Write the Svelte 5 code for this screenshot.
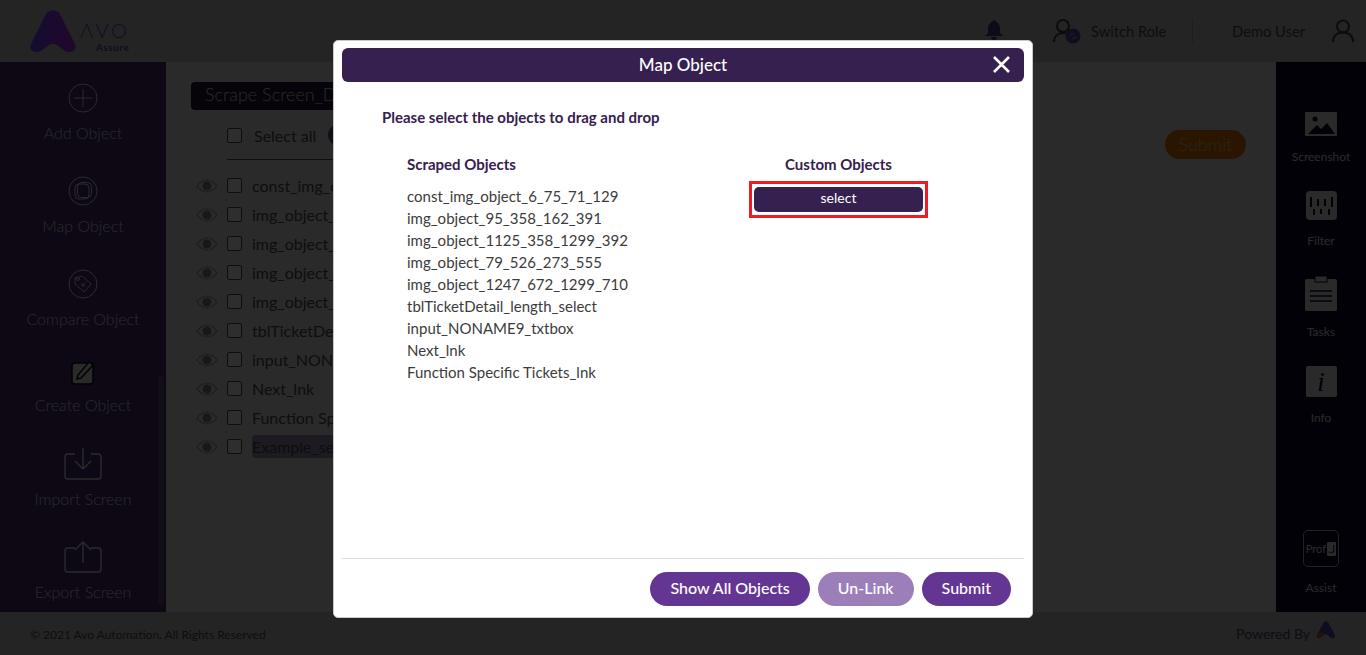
<script>
  const rows = ['const_img_object_6_75_71_129','img_object_95_358_162_391','img_object_1125_358_1299_392','img_object_79_526_273_555','img_object_1247_672_1299_710','tblTicketDetail_length_select','input_NONAME9_txtbox','Next_lnk','Function Specific Tickets_lnk'];
  const background = ['const_img_ob','img_object_','img_object_','img_object_','img_object_','tblTicketDet','input_NONA','Next_lnk','Function Spe','Example_sel'];
</script>

<div class="page">
  <header class="top">
    <div class="brand">
      <svg width="48" height="43" viewBox="0 0 48 43"><defs><linearGradient id="lg" x1="0" x2="1" y1="0" y2="0"><stop offset="0" stop-color="#6a3cff"/><stop offset="1" stop-color="#a02ccf"/></linearGradient></defs><path d="M17 4c3-5 11-5 14 0l15 30c2 5-1 8-6 8-6 0-10-8-16-8S14 42 8 42c-5 0-8-3-6-8z" fill="url(#lg)"/></svg>
      <div class="wordmark"><span class="avo">ΛVO</span><span class="assure">Assure</span></div>
    </div>
    <div class="top-right">
      <svg class="bell" width="18" height="20" viewBox="0 0 18 20"><path d="M9 0c1 0 2 1 2 2 3 1 4 4 4 7v4l3 3H0l3-3V9c0-3 1-6 4-7 0-1 1-2 2-2zM6 17h6c0 2-1 3-3 3s-3-1-3-3z" fill="#4a3478"/></svg>
      <svg class="switch" width="29" height="26" viewBox="0 0 29 26"><circle cx="10" cy="8" r="6" fill="none" stroke="#3a3a3a" stroke-width="2"/><path d="M1 24c0-6 4-9 9-9 2 0 4 .5 5 1.500" fill="none" stroke="#3a3a3a" stroke-width="2"/><circle cx="20" cy="18" r="7.500" fill="#5a3ea0"/><path d="M17 18c0-2 2-3 4-2M23 18c0 2-2 3-4 2" fill="none" stroke="#b4b4b4" stroke-width="1"/></svg>
      <span class="role">Switch Role</span>
      <span class="sep"></span>
      <span class="user">Demo User</span>
      <svg class="usericon" width="22" height="24" viewBox="0 0 22 24"><circle cx="11" cy="7.500" r="6" fill="none" stroke="#3a3a3a" stroke-width="2"/><path d="M1 23c0-6 4-9.500 10-9.500S21 17 21 23" fill="none" stroke="#3a3a3a" stroke-width="2"/></svg>
    </div>
  </header>

  <main class="main">
    <nav class="left">
      <div class="item"><span class="ic"><svg width="30" height="30" viewBox="0 0 30 30"><g fill="none" stroke="#d2d2d2" stroke-width="1"><circle cx="15" cy="15" r="14"/><path d="M15 6v18M6 15h18"/></g></svg></span><span>Add Object</span></div>
      <div class="item"><span class="ic"><svg width="30" height="30" viewBox="0 0 30 30"><g fill="none" stroke="#d2d2d2" stroke-width="1"><circle cx="15" cy="15" r="14"/><rect x="7" y="8" width="14" height="15" rx="4"/><rect x="9.500" y="6.500" width="14" height="15" rx="4"/></g></svg></span><span>Map Object</span></div>
      <div class="item"><span class="ic"><svg width="30" height="30" viewBox="0 0 30 30"><g fill="none" stroke="#d2d2d2" stroke-width="1"><circle cx="15" cy="15" r="14"/><path d="M7 9l7-2 9 8-7 8-9-8z"/><circle cx="10" cy="10" r="1.500"/><path d="M18 13l-4 4M14 14v3h3"/></g></svg></span><span>Compare Object</span></div>
      <div class="item small"><span class="ic"><svg width="24" height="24" viewBox="0 0 24 24"><rect x="1" y="2" width="21" height="21" rx="3" fill="#d2d2d2" stroke="#0a0a0a" stroke-width="1.500"/><path d="M6 18l1-4L18 1l4 3L10 17z" fill="#d2d2d2" stroke="#0a0a0a" stroke-width="1.500"/></svg></span><span>Create Object</span></div>
      <div class="item"><span class="ic"><svg width="38" height="32" viewBox="0 0 38 32"><g fill="none" stroke="#d2d2d2" stroke-width="1.400"><path d="M11 6H4C2 6 1 7 1 9v19c0 2 1 3 3 3h30c2 0 3-1 3-3V9c0-2-1-3-3-3h-7"/><path d="M19 0v21M11 13l8 8 8-8"/></g></svg></span><span>Import Screen</span></div>
      <div class="item"><span class="ic"><svg width="38" height="32" viewBox="0 0 38 32"><g fill="none" stroke="#d2d2d2" stroke-width="1.400"><path d="M11 7H4C2 7 1 8 1 10v18c0 2 1 3 3 3h30c2 0 3-1 3-3V10c0-2-1-3-3-3h-7"/><path d="M19 22V1M11 9l8-8 8 8"/></g></svg></span><span>Export Screen</span></div>
      <span class="thumb"></span>
    </nav>

    <section class="content">
      <div class="crumb">Scrape Screen_D</div>
      <div class="allrow"><span class="box"></span><span>Select all</span><span class="dot"></span></div>
      <div class="list">
        {#each background as r, i}
          <div class="lrow">
            <svg width="22" height="14" viewBox="0 0 22 14"><path d="M1 7c3-4 6-6 10-6s7 2 10 6c-3 4-6 6-10 6S4 11 1 7z" fill="none" stroke="#8c8c8c" stroke-width="1.200"/><circle cx="11" cy="7" r="4.500" fill="#787878"/></svg>
            <span class="box"></span>
            <span class:hl={i === 9} class="ltext">{r}</span>
          </div>
        {/each}
      </div>
      <button class="orange">Submit</button>
    </section>

    <aside class="right">
      <div class="tool"><svg width="32" height="24" viewBox="0 0 32 24"><rect width="32" height="24" rx="1" fill="#d2d2d2"/><circle cx="10" cy="7" r="2.500" fill="#0f0528"/><path d="M3 22l9-9 4 4 6-6 8 11z" fill="#0f0528"/></svg><span>Screenshot</span></div>
      <div class="tool t2"><svg width="31" height="29" viewBox="0 0 31 29"><rect width="31" height="29" rx="4" fill="#d2d2d2"/><g stroke="#0f0528" stroke-width="2"><path d="M5 6v10M12 8v7M19 8v7M26 6v10M8 18v6M15 18v5M23 18v6"/></g></svg><span>Filter</span></div>
      <div class="tool t3"><svg width="32" height="35" viewBox="0 0 32 35"><rect y="3" width="32" height="32" rx="2" fill="#d2d2d2"/><rect x="10" y="0" width="12" height="6" fill="#d2d2d2" stroke="#0f0528"/><g stroke="#0f0528" stroke-width="1.500"><path d="M5 15h22M5 20h22M5 25h22"/></g></svg><span>Tasks</span></div>
      <div class="tool t4"><span class="info">i</span><span>Info</span></div>
      <div class="tool assist"><span class="prof">Prof<b>.J</b></span><span>Assist</span></div>
    </aside>
  </main>

  <footer class="foot">
    <span class="copy">© 2021 Avo Automation. All Rights Reserved</span>
    <span class="powered">Powered By
      <svg width="20" height="18" viewBox="0 0 20 18"><path d="M8 1c1-1 3-1 4 0l7 13c1 3-2 4-4 3-2-1-3-4-5-4s-4 3-6 4c-2 1-4-1-3-3z" fill="#5a3ea0"/><path d="M1 14l3-3 5 1-4 4c-2 1-5 0-4-2z" fill="#b3541e"/></svg>
    </span>
  </footer>

  <div class="backdrop"></div>

  <div class="modal">
    <div class="mhead"><span>Map Object</span>
      <svg class="close" width="19" height="19" viewBox="0 0 19 19"><path d="M2 2l15 15M17 2L2 17" stroke="#fff" stroke-width="2.600" fill="none"/></svg>
    </div>
    <div class="mbody">
      <p class="lead">Please select the objects to drag and drop</p>
      <div class="cols">
        <div class="scraped">
          <h4>Scraped Objects</h4>
          <ul>{#each rows as r}<li>{r}</li>{/each}</ul>
        </div>
        <div class="custom">
          <h4>Custom Objects</h4>
          <div class="redbox"><div class="sel">select</div></div>
        </div>
      </div>
    </div>
    <div class="mfoot">
      <button class="pill">Show All Objects</button>
      <button class="pill off">Un-Link</button>
      <button class="pill">Submit</button>
    </div>
  </div>
</div>

<style>
  :global(body) { margin: 0; font-family: Lato, "Open Sans", sans-serif; }
  .page { position: relative; height: 655px; display: flex; flex-direction: column; overflow: hidden; background: #d2d2d2; color: #464646; }
  .backdrop { position: absolute; inset: 0; background: rgba(0,0,0,.8); }

  .top { height: 62px; flex: none; background: #b4b4b4; display: flex; align-items: center; font-size: 14.700px; }
  .brand { display: flex; align-items: flex-start; margin-left: 29px; width: 110px; height: 43px; }
  .wordmark { display: flex; flex-direction: column; margin-left: 3px; margin-top: 10px; color: #5a3ea0; line-height: 1; }
  .avo { font-size: 20px; line-height: 20px; letter-spacing: 2.500px; font-weight: 300; }
  .assure { font-size: 10px; line-height: 10px; align-self: flex-end; letter-spacing: .5px; font-weight: 700; margin-top: 2px; }
  .top-right { margin-left: auto; display: flex; align-items: center; }
  .bell { margin-right: 50px; margin-bottom: 2px; }
  .switch { margin-right: 9px; }
  .role { width: 101px; }
  .sep { width: 1px; height: 24px; background: #969696; margin-right: 39px; }
  .user { margin-right: 27px; }
  .usericon { margin-right: 12px; }

  .main { flex: 1; display: flex; min-height: 0; }
  .left { position: relative; width: 166px; flex: none; background: #412864; color: #d2d2d2; padding-top: 20px; box-sizing: border-box; font-size: 16px; }
  .item { display: flex; flex-direction: column; align-items: center; line-height: 20px; gap: 9px; margin-bottom: 32px; font-weight: 300; }
  .ic { height: 32px; display: flex; align-items: center; justify-content: center; }
  .item.small { gap: 10px; margin-bottom: 33px; }
  .item.small .ic { height: 24px; }
  .thumb { position: absolute; left: 158px; top: 314px; width: 6px; height: 229px; border-radius: 3px; background: #5c4778; }

  .content { position: relative; flex: 1; padding: 20px 0 0 25px; box-sizing: border-box; }
  .crumb { width: 170px; box-sizing: border-box; height: 28px; line-height: 25px; padding: 0 0 0 14px; background: #1e0f36; color: #d2d2d2; border-radius: 4px; font-size: 18px; font-weight: 300; white-space: nowrap; }
  .allrow { display: flex; align-items: center; gap: 12px; margin-left: 36px; height: 50px; border-bottom: 1px solid #464646; font-size: 16px; box-sizing: border-box; width: 130px; padding-top: 1px; white-space: nowrap; }
  .dot { width: 22px; height: 22px; border-radius: 50%; background: #5c4778; flex: none; }
  .list { margin-top: 11px; }
  .lrow { display: flex; align-items: center; height: 29px; font-size: 16px; margin-left: 5px; }
  .lrow svg { margin-right: 9px; flex: none; }
  .box { width: 13px; height: 13px; border: 1px solid #464646; border-radius: 2px; flex: none; background: #e6e6e6; box-sizing: content-box; }
  .lrow .box { margin-right: 10px; }
  .ltext { padding: 2px 0; white-space: nowrap; }
  .hl { background: #9080a8; border-radius: 3px; }
  .orange { position: absolute; right: 30px; top: 68px; width: 81px; height: 29px; border-radius: 15px; border: 0; background: #d26e00; color: #e0b080; font: 300 18px Lato, sans-serif; padding: 0 0 2px; }

  .right { width: 90px; flex: none; background: #0f0528; color: #d2d2d2; display: flex; flex-direction: column; align-items: center; font-size: 12px; padding-top: 50px; box-sizing: border-box; }
  .tool { display: flex; flex-direction: column; align-items: center; gap: 14px; line-height: 14px; }
  .t2 { margin-top: 27px; }
  .t3 { margin-top: 28px; }
  .t4 { margin-top: 27px; }
  .info { width: 31px; height: 31px; border-radius: 2px; background: #d2d2d2; color: #0f0528; font: italic 28px/31px "Liberation Serif", serif; text-align: center; }
  .assist { margin-top: auto; margin-bottom: 17px; }
  .prof { width: 36px; height: 37px; border: 1px solid #aaa; border-radius: 5px; box-sizing: border-box; display: flex; align-items: center; justify-content: center; font-size: 11px; }
  .prof b { background: #d2d2d2; color: #0f0528; font-weight: 400; padding: 0 1px; border-radius: 1px; margin-left: 1px; }

  .foot { height: 43px; flex: none; background: #b4b4b4; display: flex; align-items: center; justify-content: space-between; padding: 0 30px; box-sizing: border-box; font-size: 12px; color: #464646; }
  .copy { margin-top: 2px; }
  .powered { font-size: 14px; color: #464068; display: flex; align-items: center; gap: 6px; margin-bottom: 1px; }
  .powered svg { margin-bottom: 6px; }

  .modal { position: absolute; left: 333px; top: 40px; width: 700px; height: 578px; box-sizing: border-box; padding: 7px 8px 0; background: #fff; border: 1px solid #c8c8c8; border-radius: 5px; display: flex; flex-direction: column; color: #352050; }
  .mhead { position: relative; height: 34px; flex: none; background: #35204f; color: #fff; border-radius: 6px; display: flex; align-items: center; justify-content: center; font-size: 17px; font-weight: 500; padding-bottom: 2px; box-sizing: border-box; }
  .close { position: absolute; right: 13px; top: 7px; }
  .mbody { flex: 1; padding: 0 0 0 40px; }
  .lead { margin: 26px 0 0; font-size: 15px; font-weight: 700; line-height: 18px; }
  .cols { display: flex; margin-top: 29px; padding-left: 25px; }
  h4 { margin: 0; font-size: 15px; font-weight: 700; line-height: 18px; }
  .scraped { width: 342px; }
  ul { list-style: none; margin: 12px 0 0; padding: 0; }
  li { font-size: 15px; line-height: 22px; color: #3c3c3c; }
  .custom { width: 179px; text-align: center; }
  .redbox { margin-top: 8px; height: 37px; border: 3px solid #ed1c24; box-sizing: border-box; padding: 3px 2px; }
  .sel { height: 25px; background: #35204f; color: #fff; border-radius: 5px; font-size: 14px; line-height: 22px; }
  .mfoot { height: 59px; flex: none; border-top: 1px solid #e0dfe8; display: flex; justify-content: flex-end; align-items: flex-start; gap: 8px; padding: 13px 13px 0 0; box-sizing: border-box; }
  .pill { height: 34px; border: 0; border-radius: 17px; background: #643693; color: #fff; font: 500 16px Lato, sans-serif; padding: 0 20px 3px; }
  .pill.off { background: #9c7fb8; }
</style>
